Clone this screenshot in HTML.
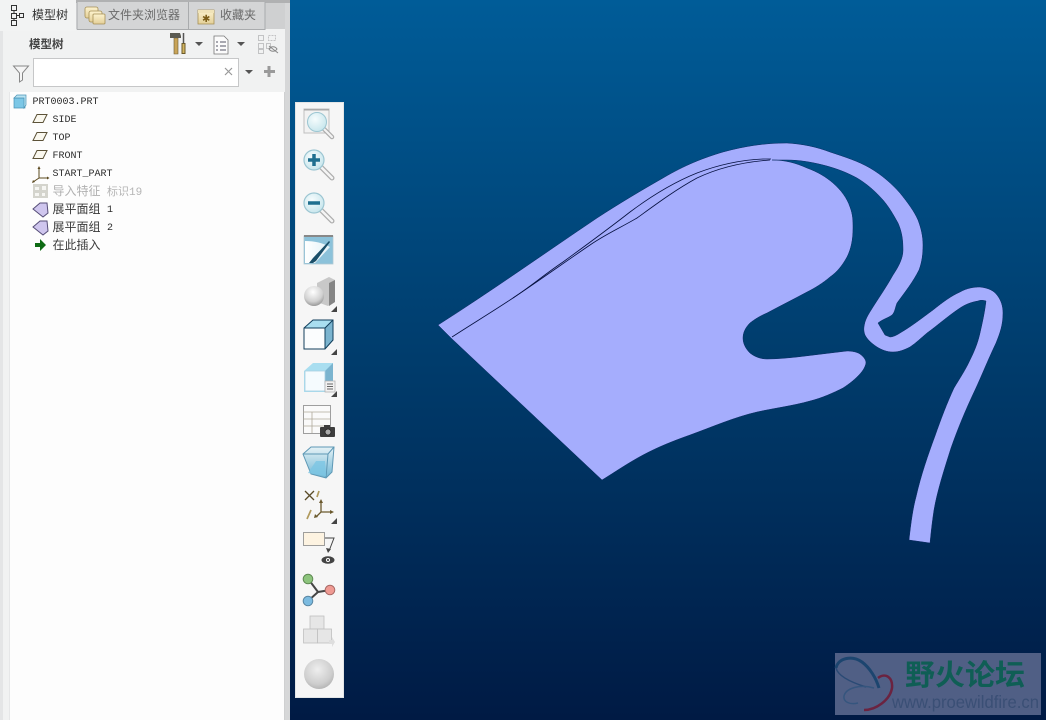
<!DOCTYPE html>
<html lang="zh"><head><meta charset="utf-8"><title>模型树</title>
<style>
html,body{margin:0;padding:0;width:1046px;height:720px;overflow:hidden;background:#00406f}
svg{display:block;position:absolute;left:0;top:0}
.t{font-family:"Liberation Mono","Noto Sans CJK SC",monospace;font-size:10px;fill:#2c2c2c}
.c{font-family:"Liberation Sans","Noto Sans CJK SC",sans-serif;font-size:12px;fill:#3a3a3a}
</style></head><body>
<svg width="1046" height="720" viewBox="0 0 1046 720" xmlns="http://www.w3.org/2000/svg">
<defs>
<linearGradient id="bg" x1="0" y1="0" x2="0" y2="1"><stop offset="0" stop-color="#005c98"/><stop offset=".5" stop-color="#003c6c"/><stop offset="1" stop-color="#001a44"/></linearGradient>
<linearGradient id="blue" x1="0" y1="0" x2="1" y2="1"><stop offset="0" stop-color="#f4fbff"/><stop offset="1" stop-color="#86c0da"/></linearGradient>
<radialGradient id="lens" cx=".4" cy=".35" r=".7"><stop offset="0" stop-color="#f6fcfd"/><stop offset="1" stop-color="#c6e5ec"/></radialGradient>
<radialGradient id="sph" cx=".45" cy=".35" r=".7"><stop offset="0" stop-color="#eeeeee"/><stop offset=".7" stop-color="#cdcdcd"/><stop offset="1" stop-color="#b0b0b0"/></radialGradient>
<radialGradient id="sph2" cx=".45" cy=".3" r=".8"><stop offset="0" stop-color="#fff"/><stop offset=".6" stop-color="#d0d0d0"/><stop offset="1" stop-color="#808080"/></radialGradient>
<linearGradient id="glass" x1="0" y1="0" x2="0" y2="1"><stop offset="0" stop-color="#e6f2f6"/><stop offset="1" stop-color="#6fb6d4"/></linearGradient>
<linearGradient id="fold" x1="0" y1="0" x2="0" y2="1"><stop offset="0" stop-color="#fdf3cf"/><stop offset="1" stop-color="#e3cf98"/></linearGradient>
<linearGradient id="fan" x1="0" y1="0" x2="1" y2="0"><stop offset="0" stop-color="#ffffff"/><stop offset="1" stop-color="#e2f1f7"/></linearGradient>
</defs>

<rect x="290" y="0" width="756" height="720" fill="url(#bg)"/>

<!-- part geometry -->
<path fill="#a5adfd" stroke="#0a2a60" stroke-width=".5" d="M438 325 C490 292 545 253 597 218 C620 203 642 190 663 178 C685 165 703 158 723 152 C745 146 765 143 787 143 C803 144 817 147 830 152 C845 157 858 161 870 168 C882 175 892 184 900 193 C908 203 914 211 918 220 C921 228 923 236 923 245 C923 254 922 262 919 270 C913 282 905 292 897 303 C895 308 895 312 892 315 C888 318 883 319 878 323 L885 335 L890 337 C893 337 897 335 900 333 C912 326 922 318 933 310 C943 302 951 296 960 292 C967 288 974 287 980 287 C989 288 994 291 997 295 C1001 300 1003 306 1003 313 C1003 325 1000 333 996 343 C987 362 982 375 975 390 C966 409 958 428 951 448 C944 470 937 492 934 510 C932 523 931 533 930 543 L909 540 C911 522 913 508 916 497 C921 475 928 455 935 436 C941 419 947 403 954 388 C960 378 966 369 970 360 C975 350 978 342 980 333 C983 320 985 310 986 301 C983 300 980 300 978 301 C972 302 966 304 960 308 C948 316 938 325 927 333 C921 338 916 343 910 347 C904 350 899 352 893 352 C887 352 882 350 877 347 C871 343 867 339 865 335 C863 330 864 326 865 322 C867 316 870 312 873 307 C880 296 887 286 893 275 C899 266 903 258 903 250 C903 240 902 232 898 223 C893 214 889 207 883 200 C875 191 867 184 857 178 C846 172 835 168 823 165 C811 162 799 160 787 160 L772 160 C785 160 796 163 807 168 C818 172 826 177 833 183 C841 190 847 198 850 207 C853 215 853 221 853 228 C853 240 851 249 847 257 C842 266 837 272 830 277 C823 283 815 288 807 292 C794 299 780 306 767 313 C760 316 755 319 750 323 C746 327 743 332 743 338 C743 344 746 349 750 353 C755 357 761 359 767 359 C777 359 787 358 797 357 C814 355 830 353 847 351 C852 351 857 352 860 354 C864 357 866 360 866 363 C865 368 862 372 858 376 C853 381 849 384 843 388 C833 393 822 398 810 401 C792 406 775 408 757 412 C735 417 712 427 690 435 C673 441 658 447 643 455 C628 463 615 472 602 480 L451 338 Z"/>
<path fill="none" stroke="#05103f" stroke-width=".8" d="M452 337 C472 324 492 312 513 298 C530 287 545 274 563 262 C585 246 607 230 630 212 C650 197 672 183 697 173 C718 165 740 160 763 159 L771 159"/>
<path fill="none" stroke="#05103f" stroke-width=".8" d="M513 298 C540 280 565 262 590 245 C606 234 620 228 637 218 C655 205 675 190 697 178 C718 168 742 162 770 160"/>

<!-- left panel -->
<rect x="0" y="0" width="290" height="720" fill="#e9eaeb"/>
<rect x="285" y="0" width="5" height="720" fill="#d6d7d8"/>
<rect x="0" y="0" width="290" height="3" fill="#b0b1b2"/>
<rect x="0" y="29" width="285" height="691" fill="#f1f2f2"/>
<rect x="0" y="0" width="3" height="720" fill="#e4e5e6"/>
<rect x="77" y="2" width="188" height="27" fill="#d4d5d6"/>
<rect x="265" y="3" width="20" height="26" fill="#cfd0d1"/>
<path d="M77 29.500H265V2M77 29.500V2M188.500 2V29" fill="none" stroke="#a9abad" stroke-width="1"/>
<rect x="0" y="0" width="76" height="31" fill="#f2f3f3"/>
<rect x="9" y="92" width="275" height="628" fill="#fdfdfd"/>
<rect x="284" y="92" width="1" height="628" fill="#cfd0d1"/>
<rect x="9" y="92" width="1" height="628" fill="#e6e7e8"/>

<!-- tabs -->
<g fill="none" stroke="#333" stroke-width="1">
<rect x="11.500" y="5.500" width="5" height="5"/><rect x="11.500" y="13.500" width="5" height="5"/><rect x="11.500" y="20.500" width="5" height="5"/><rect x="19.500" y="13.500" width="4" height="4"/>
<path d="M14 10.500V13.500M14 18.500V20.500M16.500 15.500H19.500"/>
</g>
<text class="c" x="32" y="19" style="fill:#333">模型树</text>
<text class="c" x="108" y="19" style="fill:#6a6a6a">文件夹浏览器</text>
<text class="c" x="220" y="19" style="fill:#6a6a6a">收藏夹</text>
<g stroke="#a58f55" stroke-width=".8" fill="url(#fold)">
<rect x="85" y="7" width="13" height="11" rx="2"/><rect x="89" y="11" width="13" height="11" rx="2"/><rect x="93" y="14" width="12" height="10" rx="1"/>
<path d="M198 10h16v14h-16z"/>
</g>
<path d="M198 10h16v3h-16z" fill="#f0e3b8"/>
<text x="202" y="22" font-size="10" fill="#7b5d18" font-family="Liberation Sans,sans-serif">✱</text>

<!-- header row -->
<text class="c" x="29" y="48" style="font-weight:700;font-size:11.500px;fill:#444">模型树</text>
<path d="M174 38h4v16h-4z" fill="#c9a458" stroke="#6a5a33" stroke-width=".6"/>
<path d="M170 33h10l1 3v2h-11z" fill="#5a5a52"/>
<path d="M183.500 33v10" stroke="#555" stroke-width="1.500"/><path d="M183.500 43v11" stroke="#6b5a2a" stroke-width="4"/><path d="M183.500 44v9" stroke="#d1b35f" stroke-width="2"/>
<path d="M195 42h8l-4 4z" fill="#555"/>
<path d="M214 36h10l4 4v14h-14z" fill="#fbfbfb" stroke="#777" stroke-width=".8"/>
<path d="M216 42h2M220 42h6M216 46h2M220 46h6M216 50h2M220 50h6" stroke="#556" stroke-width="1"/>
<path d="M237 42h8l-4 4z" fill="#555"/>
<g fill="none" stroke="#c2c3c4" stroke-width="1"><rect x="258.500" y="35.500" width="5" height="5"/><rect x="258.500" y="43.500" width="5" height="5"/><rect x="258.500" y="49.500" width="5" height="4"/><rect x="268.500" y="35.500" width="7" height="5" stroke-dasharray="2 1"/><rect x="266.500" y="43.500" width="4" height="5"/></g>
<path d="M269 49c2-3 6-3 8 0c-2 3-6 3-8 0zM269 46l9 7" fill="none" stroke="#888" stroke-width="1"/>

<!-- search row -->
<path d="M13.500 66h15l-6 7v7l-3 2v-9z" fill="#f5f5f5" stroke="#888" stroke-width="1"/>
<rect x="33.500" y="58.500" width="205" height="28" fill="#fff" stroke="#c6c7c8"/>
<path d="M225 68l7 7M232 68l-7 7" stroke="#999" stroke-width="1.200"/>
<path d="M245 70h8l-4 4z" fill="#555"/>
<path d="M269 66v11M264 71.500h11" stroke="#9a9a9a" stroke-width="3"/>

<!-- tree -->
<path d="M14 98h11v10H14z" fill="#7cc7e6" stroke="#4a93b5" stroke-width=".7"/><path d="M17 95h9v10l-2 3V98H14z" fill="#b8e3f2" stroke="#4a93b5" stroke-width=".7"/>
<text class="t" x="32.500" y="104">PRT0003.PRT</text>
<g fill="#faf8ef" stroke="#5c5238" stroke-width="1">
<path d="M33 122.500l4-8h10l-4 8z"/><path d="M33 140.500l4-8h10l-4 8z"/><path d="M33 158.500l4-8h10l-4 8z"/>
</g>
<text class="t" x="52.500" y="122">SIDE</text><text class="t" x="52.500" y="140">TOP</text><text class="t" x="52.500" y="158">FRONT</text>
<path d="M39 167v11l-6 4M39 178h9" fill="none" stroke="#5c4a20" stroke-width="1"/><path d="M37.500 169l1.500-3l1.500 3zM47 176.500l2.500 1.500l-2.500 1.500zM33 180l-1 3l3-1z" fill="#5c4a20"/>
<text class="t" x="52.500" y="176">START_PART</text>
<rect x="33" y="184" width="15" height="14" fill="#d4d4cd"/><path d="M35 187h4v3h-4zM42 186h4v4h-4zM35 193h4v3h-4zM42 193h3v3h-3z" fill="#f6f6f3"/>
<text class="c" x="52.500" y="195" style="fill:#b0b0b0">导入特征</text><text class="t" x="107" y="195" style="fill:#b5b5b5;font-size:11px">标识19</text>
<g fill="#cfc6ee" stroke="#554d77" stroke-width="1">
<path d="M33 209l7-6h7l1 10l-5 4z"/><path d="M33 227l7-6h7l1 10l-5 4z"/>
</g>
<text class="c" x="52.500" y="213">展平面组</text><text class="t" x="107" y="212">1</text>
<text class="c" x="52.500" y="231">展平面组</text><text class="t" x="107" y="230">2</text>
<path d="M35 243h5v-4l6 6l-6 6v-4h-5z" fill="#0e6b14"/>
<text class="c" x="52.500" y="249">在此插入</text>

<!-- toolbar -->
<rect x="295.500" y="102.500" width="48" height="595" fill="#f6f6f6" stroke="#e3e5e6"/>
<!-- refit -->
<rect x="304" y="109" width="25" height="24" fill="#f2f2f2" stroke="#c0c0c0"/><rect x="304" y="109" width="25" height="1.500" fill="#aaa"/>
<path d="M323 128l9 9" stroke="#aeaeae" stroke-width="4.500" stroke-linecap="round"/><path d="M323 128l9 9" stroke="#f4f4f4" stroke-width="2" stroke-linecap="round"/>
<circle cx="317" cy="122" r="9.500" fill="url(#lens)" stroke="#9cc6d2" stroke-width="1"/>
<!-- zoom in -->
<path d="M321 167l11 11" stroke="#aeaeae" stroke-width="5" stroke-linecap="round"/><path d="M321 167l11 11" stroke="#f4f4f4" stroke-width="2.500" stroke-linecap="round"/>
<circle cx="314" cy="160" r="10" fill="url(#lens)" stroke="#9cc6d2" stroke-width="1.200"/>
<path d="M314 154v12M308 160h12" stroke="#1f6f8f" stroke-width="3.500"/>
<!-- zoom out -->
<path d="M321 210l11 11" stroke="#aeaeae" stroke-width="5" stroke-linecap="round"/><path d="M321 210l11 11" stroke="#f4f4f4" stroke-width="2.500" stroke-linecap="round"/>
<circle cx="314" cy="203" r="10" fill="url(#lens)" stroke="#9cc6d2" stroke-width="1.200"/>
<path d="M308 203h12" stroke="#1f6f8f" stroke-width="3.500"/>
<!-- repaint -->
<rect x="304" y="236" width="29" height="28" fill="#8cc2da" stroke="#b0c8d2" stroke-width=".8"/>
<path d="M305 263V241c10 0 18 2 25 6l-15 16z" fill="url(#fan)"/>
<rect x="304" y="235" width="29" height="2" fill="#888"/>
<path d="M309 263l4-5l16-17l1 1l-14 19l-3 2z" fill="#1b4f69"/>
<!-- shade -->
<path d="M317 283l12-6l6 3v22l-7 4l-11-4z" fill="#c8c8c8"/><path d="M329 283l6-3v22l-6 4z" fill="#858585"/>
<circle cx="314" cy="296" r="10" fill="url(#sph2)"/>
<path d="M331 312l6-6v6z" fill="#444"/>
<!-- cube -->
<path d="M304 328l9-8h20v20l-8 9z" fill="#7bb4cf"/>
<path d="M304 328l9-8h20l-8 8z" fill="#a9def0"/>
<rect x="304" y="328" width="21" height="21" fill="#fbfdfe"/>
<path d="M304 328l9-8h20v20l-8 9h-21zM304 328h21v21M325 328l8-8" fill="none" stroke="#123f5c" stroke-width="1"/>
<path d="M331 355l6-6v6z" fill="#444"/>
<!-- saved views -->
<path d="M304 371l9-8h20v20l-8 9h-21z" fill="#a9def0"/><path d="M325 371l8-8v20l-8 9z" fill="#7bb4cf"/>
<rect x="305" y="371" width="20" height="20" fill="#f5fbfe" stroke="#a9cfe0" stroke-width=".8"/>
<rect x="325" y="381" width="10" height="11" fill="#f1f1f1" stroke="#aaa" stroke-width=".7"/><path d="M327 384h6M327 386.500h6M327 389h6" stroke="#666" stroke-width="1"/>
<path d="M331 397l6-6v6z" fill="#444"/>
<!-- table camera -->
<rect x="303.500" y="405.500" width="27" height="28" fill="#fafafa" stroke="#888" stroke-width=".8"/>
<path d="M303 412h27M303 419h27M303 426h27M312 412v21" stroke="#b0a99a" stroke-width=".8"/>
<rect x="320" y="427" width="15" height="10" rx="1" fill="#3d3d3d"/><rect x="324" y="425" width="6" height="3" fill="#3d3d3d"/><circle cx="328" cy="432" r="3" fill="#aaa" stroke="#222" stroke-width=".8"/>
<!-- glass -->
<path d="M303 454l8-7h23l-2 25l-6 6l-15-4z" fill="url(#glass)" stroke="#5e98b5" stroke-width="1"/>
<path d="M303 454h25l6-7M328 454l-2 24" fill="none" stroke="#5e98b5" stroke-width="1"/>
<path d="M308 473l8-12h9l1 15z" fill="#7cc5e4" opacity=".8"/>
<!-- datum -->
<path d="M305 491l9 9M314 491l-9 9" stroke="#5a4c28" stroke-width="1.300"/>
<path d="M319 491l-2 6M311 510l-4 9" stroke="#b09a5d" stroke-width="1.700"/>
<path d="M321 501v11M316 517l5-5h11" fill="none" stroke="#6b5a2e" stroke-width="1.300"/>
<path d="M319 503l2-4l2 4zM330 510l4 2l-4 2zM315 514l-1 4l4-1z" fill="#6b5a2e"/>
<path d="M331 524l6-6v6z" fill="#444"/>
<!-- display style -->
<rect x="303.500" y="532.500" width="21" height="13" fill="#fdf3e1" stroke="#888" stroke-width=".8"/>
<path d="M325 538h9l-5 13" fill="none" stroke="#444" stroke-width="1"/><path d="M326 548l2 5l3-4z" fill="#444"/>
<ellipse cx="328" cy="560" rx="6.500" ry="3.800" fill="#444"/><circle cx="328" cy="560" r="2" fill="#fff"/><circle cx="328" cy="560" r="1" fill="#333"/>
<!-- tree icon -->
<path d="M309 580l9 12l12-2M318 592l-10 9" fill="none" stroke="#454545" stroke-width="2"/>
<circle cx="308" cy="579" r="4.800" fill="#8dc47d" stroke="#5f8a53"/><circle cx="330" cy="590" r="4.800" fill="#ef9a93" stroke="#a86a66"/><circle cx="308" cy="601" r="4.800" fill="#7cbbe0" stroke="#5a87a3"/>
<!-- blocks -->
<g fill="#e6e6e6" stroke="#c0c0c0" stroke-width=".8"><rect x="310" y="616" width="14" height="13"/><rect x="303.500" y="629" width="14" height="14"/><rect x="317.500" y="629" width="14" height="14"/></g>
<path d="M329 640h3v-3l3 5l-3 5v-3h-3z" fill="#dedede"/>
<!-- sphere -->
<circle cx="319" cy="674" r="15" fill="url(#sph)"/>

<!-- watermark -->
<rect x="835" y="653" width="206" height="62" fill="#505f85"/>
<path d="M836 668C838 658 852 655 862 662C870 668 876 678 879 688" fill="none" stroke="#1c456f" stroke-width="3"/>
<path d="M836 668C838 676 850 682 866 687" fill="none" stroke="#2a4a75" stroke-width="1.500"/>
<path d="M878 678C886 672 893 678 892 688C890 700 876 710 864 710" fill="none" stroke="#6b2340" stroke-width="2.500"/>
<path d="M874 688C860 684 846 688 844 696C843 702 850 705 858 703" fill="none" stroke="#35557e" stroke-width="1.500"/>
<text x="905" y="685" font-family="'Noto Sans CJK SC',sans-serif" font-size="29" font-weight="700" fill="#0f5e55" textLength="120" lengthAdjust="spacingAndGlyphs">野火论坛</text>
<text x="892" y="708" font-family="Liberation Sans,sans-serif" font-size="17.500" fill="#3a4f75" textLength="147" lengthAdjust="spacingAndGlyphs">www.proewildfire.cn</text>
</svg>
</body></html>
